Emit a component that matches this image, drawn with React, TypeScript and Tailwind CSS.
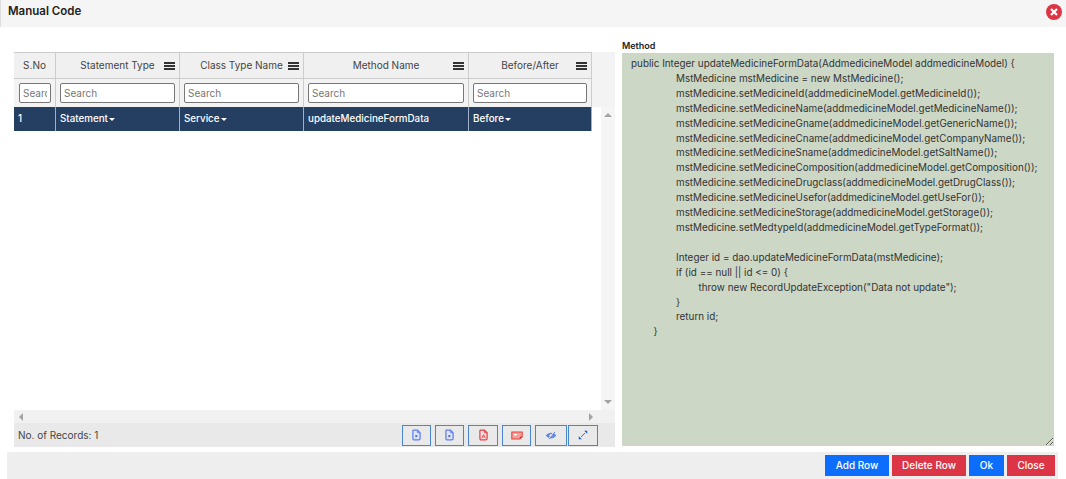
const columns = [
  { name: "S.No", width: "w-[42px]", menu: false },
  { name: "Statement Type", width: "w-[124px]", menu: true },
  { name: "Class Type Name", width: "w-[124px]", menu: true },
  { name: "Method Name", width: "w-[165px]", menu: true },
  { name: "Before/After", width: "w-[123px]", menu: true },
];

const row = [
  { value: "1", caret: false },
  { value: "Statement", caret: true },
  { value: "Service", caret: true },
  { value: "updateMedicineFormData", caret: false },
  { value: "Before", caret: true },
];

const code = `public Integer updateMedicineFormData(AddmedicineModel addmedicineModel) {
\t\tMstMedicine mstMedicine = new MstMedicine();
\t\tmstMedicine.setMedicineId(addmedicineModel.getMedicineId());
\t\tmstMedicine.setMedicineName(addmedicineModel.getMedicineName());
\t\tmstMedicine.setMedicineGname(addmedicineModel.getGenericName());
\t\tmstMedicine.setMedicineCname(addmedicineModel.getCompanyName());
\t\tmstMedicine.setMedicineSname(addmedicineModel.getSaltName());
\t\tmstMedicine.setMedicineComposition(addmedicineModel.getComposition());
\t\tmstMedicine.setMedicineDrugclass(addmedicineModel.getDrugClass());
\t\tmstMedicine.setMedicineUsefor(addmedicineModel.getUseFor());
\t\tmstMedicine.setMedicineStorage(addmedicineModel.getStorage());
\t\tmstMedicine.setMedtypeId(addmedicineModel.getTypeFormat());

\t\tInteger id = dao.updateMedicineFormData(mstMedicine);
\t\tif (id == null || id <= 0) {
\t\t\tthrow new RecordUpdateException("Data not update");
\t\t}
\t\treturn id;
\t}`;

function MenuIcon() {
  return (
    <span className="absolute right-[4px] top-[9px] flex w-[11px] flex-col gap-[1px]">
      <span className="h-[2px] bg-[#333]" />
      <span className="h-[2px] bg-[#333]" />
      <span className="h-[2px] bg-[#333]" />
    </span>
  );
}

function FileIcon({ color }: { color: string }) {
  return (
    <svg width="9" height="12" viewBox="0 0 10 13" fill="none">
      <path d="M2 1h4l3 3v6.500A1.500 1.500 0 0 1 7.500 12h-5A1.500 1.500 0 0 1 1 10.500V2a1 1 0 0 1 1-1z" stroke={color} strokeWidth="1.400" fill="#dfe5f5" />
      <path d="M6 1v3h3" stroke={color} strokeWidth="1" />
      <path d="M3.800 6.500l2 2.500M5.800 6.500l-2 2.500" stroke="#2f55c0" strokeWidth="1" />
    </svg>
  );
}

function PdfIcon() {
  return (
    <svg width="9" height="12" viewBox="0 0 10 13" fill="none">
      <path d="M2 1h4l3 3v6.500A1.500 1.500 0 0 1 7.500 12h-5A1.500 1.500 0 0 1 1 10.500V2a1 1 0 0 1 1-1z" stroke="#e8404a" strokeWidth="1.400" fill="#f7e3e3" />
      <path d="M6 1v3h3" stroke="#e8404a" strokeWidth="1" />
      <path d="M3 10l2-4 2 4M3.800 8.500h2.400" stroke="#e8404a" strokeWidth="0.900" />
    </svg>
  );
}

function MailIcon() {
  return (
    <svg width="12" height="9" viewBox="0 0 15 11" fill="none">
      <path d="M1 1h13v6l-3 3H1z" fill="#f5a09a" stroke="#e8403a" strokeWidth="1.300" />
      <path d="M3 3.500h5L5.500 6z" fill="#fff" />
      <path d="M14 7h-3v3z" fill="#c9302c" />
    </svg>
  );
}

function EyeSlashIcon() {
  return (
    <svg width="12" height="9" viewBox="0 0 15 11" fill="none">
      <path d="M1 5.500C3 3 5 2 7.500 2S12 3 14 5.500C12 8 10 9 7.500 9S3 8 1 5.500z" fill="#5f84e8" />
      <circle cx="7.500" cy="5.500" r="2" fill="#e6e8f2" />
      <path d="M4.500 10L11.500 1" stroke="#e9e9e9" strokeWidth="1.500" />
      <path d="M5.500 10L12.500 1" stroke="#3f68d8" strokeWidth="1" />
    </svg>
  );
}

function ExpandIcon() {
  return (
    <svg width="10" height="10" viewBox="0 0 13 13" fill="none">
      <path d="M4 9l5-5" stroke="#2a62cc" strokeWidth="1.200" />
      <path d="M8 1h4v4z" fill="#1f5ac8" />
      <path d="M1 8v4h4z" fill="#1f5ac8" />
    </svg>
  );
}

function ToolButton({ children, width }: { children: React.ReactNode; width: string }) {
  return <button className={`flex h-[21px] items-center justify-center border-[1.500px] border-[#4a86d0] ${width}`}>{children}</button>;
}

export default function App() {
  return (
    <div className="h-[479px] w-[1066px] overflow-hidden bg-white font-['Inter',sans-serif] text-[10px] text-[#333]">
      <div className="flex h-[27px] items-center justify-between border-l border-[#ddd] bg-[#f5f5f5] pb-[3px] pl-[7px] pr-[4px]">
        <span className="text-[11.500px] font-semibold text-[#222]">Manual Code</span>
        <span className="flex h-4 w-4 items-center justify-center rounded-full bg-[#dc3545]">
          <svg width="8" height="8" viewBox="0 0 8 8"><path d="M1 1l6 6M7 1L1 7" stroke="#fff" strokeWidth="2.200" /></svg>
        </span>
      </div>

      <div className="flex h-[425px] pl-[14px] pr-3">
        <div className="mt-[25px] flex h-[395px] w-[601px] flex-col">
          <div className="flex bg-[#f3f3f3]">
            <div className="w-[578px] shrink-0">
              <div className="flex h-[27px] border-y border-[#ccc] bg-[#f0f0f0]">
                {columns.map((c) => (
                  <div key={c.name} className={`${c.width} relative flex shrink-0 items-center justify-center border-r border-[#ccc] text-[#444]`}>
                    <span>{c.name}</span>
                    {c.menu && <MenuIcon />}
                  </div>
                ))}
              </div>
              <div className="flex h-[28px]">
                {columns.map((c, i) => (
                  <div key={c.name} className={`${c.width} flex shrink-0 items-center border-r border-[#ccc] pr-[4px] ${i === 0 ? "pl-[5px]" : "pl-[4px]"}`}>
                    <input readOnly placeholder="Search" className="h-[20px] w-full rounded-[2px] border border-[#777] bg-white px-[3px] text-[10px] placeholder:text-[#777]" />
                  </div>
                ))}
              </div>
            </div>
            <div className="flex-1" />
          </div>
          <div className="flex min-h-0 flex-1">
            <div className="flex w-[587px] flex-col">
              <div className="flex-1">
                <div className="flex h-[24px] w-[578px] bg-[#253f63] text-[9.800px] text-white">
                  {row.map((cell, i) => (
                    <div key={i} className={`${columns[i].width} flex shrink-0 items-center border-r border-[#9fb0c6] pl-[4px] font-medium`}>
                      {cell.value}
                      {cell.caret && <span className="ml-[1px] mt-[1px] border-x-[3px] border-t-[3px] border-x-transparent border-t-white" />}
                    </div>
                  ))}
                </div>
              </div>
            </div>
            <div className="flex w-[14px] flex-col items-center justify-between bg-[#f5f5f5] py-[6px]">
              <span className="border-x-[4px] border-b-[4px] border-x-transparent border-b-[#a3a3a3]" />
              <span className="border-x-[4px] border-t-[4px] border-x-transparent border-t-[#a3a3a3]" />
            </div>
          </div>
          <div className="flex h-[13px] items-center justify-between bg-[#f1f1f1] px-[5px]">
            <span className="border-y-[4px] border-r-[4px] border-y-transparent border-r-[#a3a3a3]" />
            <span className="mr-[17px] border-y-[4px] border-l-[4px] border-y-transparent border-l-[#a3a3a3]" />
          </div>
          <div className="flex h-[24px] items-center justify-between bg-[#e9e9e9] pl-1 pr-[17px]">
            <span className="text-[#444]">No. of Records: 1</span>
            <div className="flex">
              <ToolButton width="w-[29px]"><FileIcon color="#5f7fee" /></ToolButton>
              <span className="w-[4px]" />
              <ToolButton width="w-[29px]"><FileIcon color="#5f7fee" /></ToolButton>
              <span className="w-[4px]" />
              <ToolButton width="w-[30px]"><PdfIcon /></ToolButton>
              <span className="w-[4px]" />
              <ToolButton width="w-[29px]"><MailIcon /></ToolButton>
              <span className="w-[4px]" />
              <ToolButton width="w-[32px]"><EyeSlashIcon /></ToolButton>
              <span className="w-[1px]" />
              <ToolButton width="w-[30px]"><ExpandIcon /></ToolButton>
            </div>
          </div>
        </div>

        <div className="ml-[7px] flex w-[432px] flex-col pt-[13px]">
          <label className="h-[13px] text-[9px] font-semibold leading-[11px] text-[#222]">Method</label>
          <textarea
            readOnly
            value={code}
            className="h-[393px] w-full resize-y whitespace-pre bg-[#cdd7c6] pb-[3px] pl-[9px] pt-[3px] text-[9.900px] leading-[14.900px] text-[#333] outline-none [tab-size:22.500px]"
          />
        </div>
      </div>

      <div className="ml-[7px] flex h-[27px] w-[1051px] items-center justify-end gap-[3px] bg-[#eeeeee] pr-[3px]">
        <button className="h-[21px] w-[64px] bg-[#0d6efd] text-[10px] font-medium text-white">Add Row</button>
        <button className="h-[21px] w-[74px] bg-[#dc3545] text-[10px] font-medium text-white">Delete Row</button>
        <button className="h-[21px] w-[35px] bg-[#0d6efd] text-[10px] font-medium text-white">Ok</button>
        <button className="h-[21px] w-[48px] bg-[#dc3545] text-[10px] font-medium text-white">Close</button>
      </div>
    </div>
  );
}
